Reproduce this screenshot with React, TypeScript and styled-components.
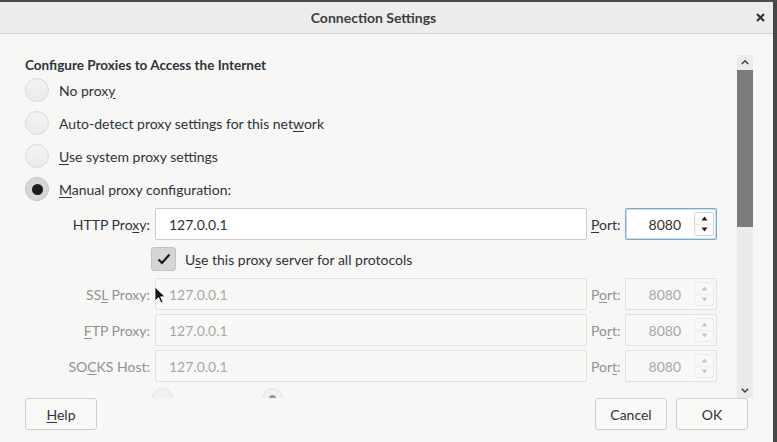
import React from "react";
import styled, { createGlobalStyle, css } from "styled-components";

const GlobalStyle = createGlobalStyle`
  html, body {
    margin: 0;
    padding: 0;
    background: #f7f7f6;
  }
  body {
    font-family: Lato, "Open Sans", "DejaVu Sans", sans-serif;
    color: #2e3436;
    font-size: 14px;
  }
`;

const Window = styled.div`
  position: relative;
  width: 777px;
  height: 442px;
  box-sizing: border-box;
  border-top: 2px solid #4d4d4d;
  border-right: 4px solid #474747;
  background: #f7f7f6;
  display: flex;
  flex-direction: column;
  overflow: hidden;
`;

const TitleBar = styled.header`
  flex: none;
  height: 31px;
  display: flex;
  align-items: center;
  background: #ededed;
  border-bottom: 1px solid #d2d2d1;
`;

const Title = styled.div`
  flex: 1;
  text-align: center;
  font-weight: 700;
  font-size: 14px;
  color: #3b3e3f;
`;

const Close = styled.div`
  width: 26px;
  display: flex;
  justify-content: center;
  align-items: center;
  color: #2e3436;
`;

const Body = styled.div`
  flex: 1;
  min-height: 0;
  display: flex;
  padding: 21px 20px 0 0;
`;

const Viewport = styled.div`
  flex: 1;
  overflow: hidden;
`;

const Content = styled.div`
  padding: 2px 0 0 25px;
  display: flex;
  flex-direction: column;
`;

const Heading = styled.div`
  font-weight: 700;
  font-size: 13.5px;
  line-height: 16px;
  color: #2e3436;
`;

const RadioList = styled.div`
  margin-top: 5px;
  display: flex;
  flex-direction: column;
  gap: 9px;
`;

const OptionRow = styled.label`
  display: flex;
  align-items: center;
  gap: 10px;
  height: 24px;
`;

const RadioCircle = styled.span<{ $checked?: boolean; $size?: number; $faint?: boolean }>`
  flex: none;
  box-sizing: border-box;
  width: ${(p) => p.$size ?? 24}px;
  height: ${(p) => p.$size ?? 24}px;
  border-radius: 50%;
  border: 1px solid #d9d9d8;
  background: linear-gradient(#f3f3f2, #ebebea);
  display: flex;
  align-items: center;
  justify-content: center;
  ${(p) =>
    p.$checked &&
    css`
      background: #d6d6d5;
      border-color: #c6c6c5;
      &::after {
        content: "";
        width: ${p.$faint ? 7 : 11}px;
        height: ${p.$faint ? 7 : 11}px;
        border-radius: 50%;
        background: ${p.$faint ? "#9a9a9a" : "#1b1b1b"};
      }
    `}
  ${(p) =>
    p.$faint &&
    css`
      border-color: #e2e2e1;
      background: #f1f1f0;
    `}
`;

const OptionText = styled.span<{ $disabled?: boolean }>`
  font-size: 14px;
  color: ${(p) => (p.$disabled ? "#a4a7a8" : "#2e3436")};
`;

const U = styled.span`
  text-decoration: underline;
  text-underline-offset: 2px;
`;

const ProxyGrid = styled.div`
  margin: 7px 0 0 -5px;
  display: grid;
  grid-template-columns: 135px 432px 38px 92px;
  grid-auto-rows: auto;
  row-gap: 4px;
`;

const FieldLabel = styled.div<{ $disabled?: boolean; $port?: boolean }>`
  height: 32px;
  display: flex;
  align-items: center;
  justify-content: ${(p) => (p.$port ? "flex-start" : "flex-end")};
  padding: ${(p) => (p.$port ? "0 0 0 4px" : "0 5px 0 0")};
  font-size: 14px;
  color: ${(p) => (p.$disabled ? "#8f9293" : "#2e3436")};
`;

const TextField = styled.div<{ $disabled?: boolean }>`
  box-sizing: border-box;
  height: 32px;
  display: flex;
  align-items: center;
  padding-left: 13px;
  border: 1px solid ${(p) => (p.$disabled ? "#e1e1e0" : "#cdcdcc")};
  border-radius: 2px;
  background: ${(p) => (p.$disabled ? "#f8f8f7" : "#ffffff")};
  color: ${(p) => (p.$disabled ? "#a6a9aa" : "#2e3436")};
  font-size: 14px;
`;

const PortField = styled.div<{ $disabled?: boolean; $focused?: boolean }>`
  box-sizing: border-box;
  height: 32px;
  display: flex;
  align-items: stretch;
  border: 1px solid ${(p) => (p.$disabled ? "#e1e1e0" : "#cdcdcc")};
  border-radius: 2px;
  background: ${(p) => (p.$disabled ? "#f8f8f7" : "#ffffff")};
  color: ${(p) => (p.$disabled ? "#a6a9aa" : "#2e3436")};
  font-size: 14px;
  ${(p) =>
    p.$focused &&
    css`
      border-color: #74ace0;
      box-shadow: inset 0 0 0 1px #c3ddf3;
    `}
`;

const PortValue = styled.div`
  flex: 1;
  display: flex;
  align-items: center;
  justify-content: flex-end;
  padding-right: 13px;
`;

const Spinner = styled.div<{ $disabled?: boolean }>`
  width: 20px;
  margin: 3px 2px 3px 0;
  display: flex;
  flex-direction: column;
  box-sizing: border-box;
  border: 1px solid ${(p) => (p.$disabled ? "#ececeb" : "#d4d4d3")};
  border-radius: 2px;
  background: ${(p) => (p.$disabled ? "#f8f8f7" : "#fbfbfb")};
`;

const SpinButton = styled.div<{ $disabled?: boolean }>`
  flex: 1;
  display: flex;
  align-items: center;
  justify-content: center;
  color: ${(p) => (p.$disabled ? "#c9c9c9" : "#202020")};
  & + & {
    border-top: 1px solid ${(p) => (p.$disabled ? "#ececeb" : "#d4d4d3")};
  }
`;

const CheckRow = styled.label`
  grid-column: 2 / -1;
  margin: 3px 0 3px -4px;
  height: 24px;
  display: flex;
  align-items: center;
  gap: 9px;
`;

const CheckBox = styled.span`
  flex: none;
  box-sizing: border-box;
  width: 25px;
  height: 24px;
  border-radius: 3px;
  border: 1px solid #c2c2c1;
  background: #d5d5d4;
  display: flex;
  align-items: center;
  justify-content: center;
`;

const SocksRow = styled.div`
  grid-column: 2 / -1;
  margin: 2px 0 0 -3px;
  display: flex;
  align-items: flex-start;
`;

const SocksOption = styled.div<{ $width?: number }>`
  width: ${(p) => p.$width ?? 110}px;
  display: flex;
  align-items: flex-start;
`;

const Scrollbar = styled.div`
  flex: none;
  width: 16px;
  display: flex;
  flex-direction: column;
  background: #ebebea;
`;

const ScrollArrow = styled.div`
  height: 15px;
  display: flex;
  align-items: center;
  justify-content: center;
  color: #3a3a3a;
`;

const Thumb = styled.div`
  height: 157px;
  background: #7b7b7b;
`;

const Trough = styled.div`
  flex: 1;
`;

const Footer = styled.footer`
  flex: none;
  height: 44px;
  box-sizing: border-box;
  padding: 0 25px 12px;
  display: flex;
  justify-content: space-between;
  align-items: flex-start;
`;

const ButtonGroup = styled.div`
  display: flex;
  gap: 9px;
`;

const Button = styled.button`
  width: 72px;
  height: 32px;
  box-sizing: border-box;
  border: 1px solid #cfcfce;
  border-radius: 3px;
  background: #f9f9f8;
  font-family: inherit;
  font-size: 14px;
  color: #2e3436;
  padding: 0;
`;

const Pointer = styled.svg`
  position: absolute;
  left: 154px;
  top: 284px;
`;

const Chevron = ({ up, size = 8 }: { up?: boolean; size?: number }) => (
  <svg width={size} height={size * 0.6} viewBox="0 0 10 6">
    <path
      d={up ? "M1 5 L5 1 L9 5" : "M1 1 L5 5 L9 1"}
      fill="none"
      stroke="currentColor"
      strokeWidth="1.8"
    />
  </svg>
);

const Tri = ({ up }: { up?: boolean }) => (
  <svg width="7" height="5" viewBox="0 0 7 5">
    <path d={up ? "M0.5 4.5 L3.5 0.5 L6.5 4.5 Z" : "M0.5 0.5 L3.5 4.5 L6.5 0.5 Z"} fill="currentColor" />
  </svg>
);

type Row = {
  label: React.ReactNode;
  port: React.ReactNode;
  disabled?: boolean;
  focused?: boolean;
  value: string;
};

const rows: Row[] = [
  {
    label: (
      <span>
        HTTP Pro<U>x</U>y:
      </span>
    ),
    port: (
      <span>
        <U>P</U>ort:
      </span>
    ),
    focused: true,
    value: "127.0.0.1",
  },
  {
    label: (
      <span>
        SS<U>L</U> Proxy:
      </span>
    ),
    port: (
      <span>
        P<U>o</U>rt:
      </span>
    ),
    disabled: true,
    value: "127.0.0.1",
  },
  {
    label: (
      <span>
        <U>F</U>TP Proxy:
      </span>
    ),
    port: (
      <span>
        Po<U>r</U>t:
      </span>
    ),
    disabled: true,
    value: "127.0.0.1",
  },
  {
    label: (
      <span>
        SO<U>C</U>KS Host:
      </span>
    ),
    port: (
      <span>
        Por<U>t</U>:
      </span>
    ),
    disabled: true,
    value: "127.0.0.1",
  },
];

const ProxyRow: React.FC<{ row: Row }> = ({ row }) => (
  <>
    <FieldLabel $disabled={row.disabled}>{row.label}</FieldLabel>
    <TextField $disabled={row.disabled}>{row.value}</TextField>
    <FieldLabel $port $disabled={row.disabled}>
      {row.port}
    </FieldLabel>
    <PortField $disabled={row.disabled} $focused={row.focused}>
      <PortValue>8080</PortValue>
      <Spinner $disabled={row.disabled}>
        <SpinButton $disabled={row.disabled}>
          <Tri up />
        </SpinButton>
        <SpinButton $disabled={row.disabled}>
          <Tri />
        </SpinButton>
      </Spinner>
    </PortField>
  </>
);

export default function App() {
  return (
    <>
      <GlobalStyle />
      <Window>
        <TitleBar>
          <Title>Connection Settings</Title>
          <Close>
            <svg width="9" height="9" viewBox="0 0 9 9">
              <path d="M1 1 L8 8 M8 1 L1 8" stroke="currentColor" strokeWidth="2.2" />
            </svg>
          </Close>
        </TitleBar>
        <Body>
          <Viewport>
            <Content>
              <Heading>Configure Proxies to Access the Internet</Heading>
              <RadioList>
                <OptionRow>
                  <RadioCircle />
                  <OptionText>
                    No prox<U>y</U>
                  </OptionText>
                </OptionRow>
                <OptionRow>
                  <RadioCircle />
                  <OptionText>
                    Auto-detect proxy settings for this net<U>w</U>ork
                  </OptionText>
                </OptionRow>
                <OptionRow>
                  <RadioCircle />
                  <OptionText>
                    <U>U</U>se system proxy settings
                  </OptionText>
                </OptionRow>
                <OptionRow>
                  <RadioCircle $checked />
                  <OptionText>
                    <U>M</U>anual proxy configuration:
                  </OptionText>
                </OptionRow>
              </RadioList>
              <ProxyGrid>
                <ProxyRow row={rows[0]} />
                <CheckRow>
                  <CheckBox>
                    <svg width="14" height="12" viewBox="0 0 14 12">
                      <path d="M1.5 6.5 L5 10 L12.5 1.5" fill="none" stroke="#1a1a1a" strokeWidth="2.2" />
                    </svg>
                  </CheckBox>
                  <OptionText>
                    U<U>s</U>e this proxy server for all protocols
                  </OptionText>
                </CheckRow>
                {rows.slice(1).map((r, i) => (
                  <ProxyRow key={i} row={r} />
                ))}
                <SocksRow>
                  <SocksOption $width={110}>
                    <RadioCircle $size={21} $faint />
                  </SocksOption>
                  <SocksOption $width={140}>
                    <RadioCircle $size={21} $faint $checked />
                  </SocksOption>
                </SocksRow>
              </ProxyGrid>
            </Content>
          </Viewport>
          <Scrollbar>
            <ScrollArrow>
              <Chevron up />
            </ScrollArrow>
            <Thumb />
            <Trough />
            <ScrollArrow>
              <Chevron />
            </ScrollArrow>
          </Scrollbar>
        </Body>
        <Footer>
          <Button>
            <U>H</U>elp
          </Button>
          <ButtonGroup>
            <Button>Cancel</Button>
            <Button>OK</Button>
          </ButtonGroup>
        </Footer>
        <Pointer width="12" height="19" viewBox="0 0 12 19">
          <path d="M1 1 L1 15 L4.5 11.5 L7 17 L9 16 L6.6 10.8 L11 10.8 Z" fill="#111" stroke="#fff" strokeWidth="0.8" />
        </Pointer>
      </Window>
    </>
  );
}
